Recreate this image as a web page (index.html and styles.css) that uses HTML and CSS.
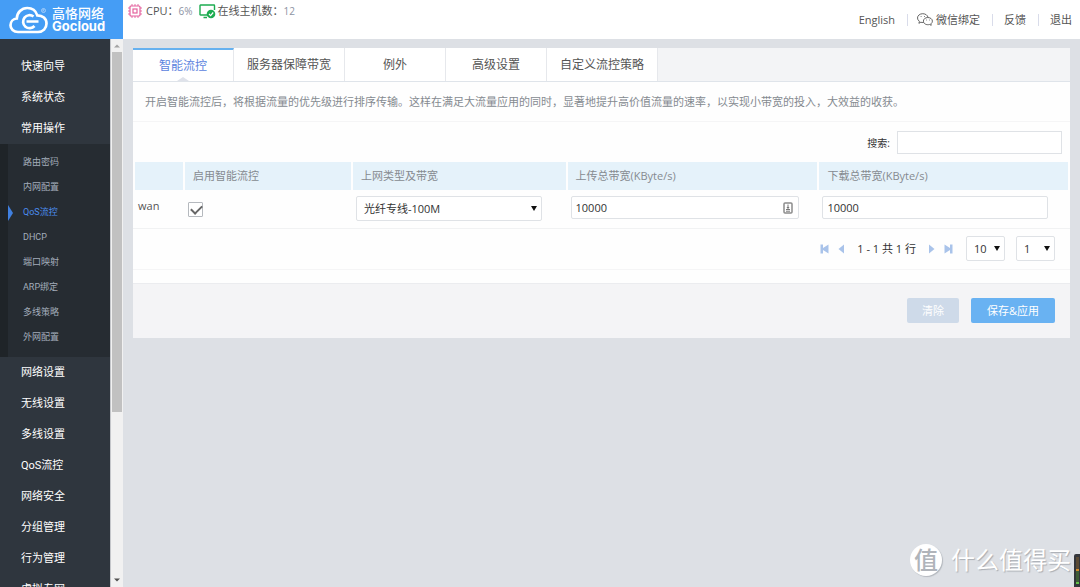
FILE: index.html
```html
<!DOCTYPE html>
<html lang="zh-CN">
<head>
<meta charset="utf-8">
<title>智能流控</title>
<link rel="stylesheet" href="styles.css">
</head>
<body>
<div class="app">
  <header class="topbar">
    <a class="brand" href="#">
      <svg class="brand-cloud" viewBox="0 0 40 28" aria-hidden="true">
        <path d="M9 26C4.500 26 1.500 23 1.500 19.300C1.500 15.500 4.300 12.800 7.800 12.500C8 6.500 12.500 2 18.300 2C23.200 2 26.800 4.700 28.300 9.300C33.700 9.300 37.500 12.700 37.500 17.600C37.500 22.500 34 26 29 26Z" fill="none" stroke="#fff" stroke-width="2.700"/>
        <path d="M24.500 10.500A6.500 6.500 0 1 0 25.500 20M17.500 15.500H29.500" fill="none" stroke="#fff" stroke-width="2.700"/>
        <circle cx="34.500" cy="4.500" r="2" fill="none" stroke="#b5d6fa" stroke-width="0.800"/>
        <path d="M34 5.500V3.500H35V4.500H34L35 5.500" fill="none" stroke="#b5d6fa" stroke-width="0.500"/>
      </svg>
      <span class="brand-text"><span class="brand-cn">高恪网络</span><span class="brand-en">Gocloud</span></span>
    </a>
    <div class="stats">
      <svg class="stat-icon" viewBox="0 0 14 14" fill="none" stroke="#e4619d" aria-hidden="true">
        <rect x="2" y="2" width="10" height="10" rx="1" stroke-width="1.200"/>
        <rect x="5" y="5" width="4" height="4" stroke-width="1.200"/>
        <path stroke-width="0.900" d="M4 0V2M7 0V2M10 0V2M4 12V14M7 12V14M10 12V14M0 4H2M0 7H2M0 10H2M12 4H14M12 7H14M12 10H14"/>
      </svg>
      <span>CPU：</span><span class="stat-value">6%</span>
      <svg class="stat-icon host-icon" viewBox="0 0 17 15" aria-hidden="true">
        <path d="M8 11H1.500Q1 11 1 10.500V1.500Q1 1 1.500 1H15Q15.500 1 15.500 1.500V6M4.500 13.500H8" fill="none" stroke="#1dac50" stroke-width="1.400"/>
        <circle cx="12" cy="10" r="4.300" fill="#1dac50"/>
        <path d="M10 10L11.600 11.600L14.200 8.500" fill="none" stroke="#fff" stroke-width="1.200"/>
      </svg>
      <span>在线主机数：</span><span class="stat-value">12</span>
    </div>
    <nav class="links">
      <a href="#" class="link-en">English</a>
      <a href="#" class="link-wechat">
        <svg viewBox="0 0 16 13" fill="none" stroke="#555" stroke-width="0.900" aria-hidden="true">
          <path d="M6.500 9.500Q5 9.700 3.900 9.200L1.900 10.300L2.400 8.300Q0.500 7 0.500 5C0.500 2.500 2.900 0.700 5.700 0.700C8.500 0.700 10.600 2.300 11 4.300"/>
          <path d="M10.800 4.500C13.400 4.500 15.400 6.100 15.400 8.100Q15.400 9.800 13.900 10.800L14.200 12.300L12.600 11.500C9.300 12.300 6.400 10.700 6.400 8.100C6.400 6.100 8.300 4.500 10.800 4.500Z"/>
          <path d="M3.700 3.500H4.500M7 3.500H7.800M9 7H9.700M12 7H12.700"/>
        </svg>微信绑定</a>
      <a href="#">反馈</a>
      <a href="#">退出</a>
    </nav>
  </header>
  <div class="body">
    <nav class="sidebar">
      <a href="#" class="nav-item">快速向导</a>
      <a href="#" class="nav-item">系统状态</a>
      <a href="#" class="nav-item">常用操作</a>
      <div class="submenu">
        <a href="#">路由密码</a>
        <a href="#">内网配置</a>
        <a href="#" class="current">QoS流控</a>
        <a href="#">DHCP</a>
        <a href="#">端口映射</a>
        <a href="#">ARP绑定</a>
        <a href="#">多线策略</a>
        <a href="#">外网配置</a>
      </div>
      <a href="#" class="nav-item">网络设置</a>
      <a href="#" class="nav-item">无线设置</a>
      <a href="#" class="nav-item">多线设置</a>
      <a href="#" class="nav-item">QoS流控</a>
      <a href="#" class="nav-item">网络安全</a>
      <a href="#" class="nav-item">分组管理</a>
      <a href="#" class="nav-item">行为管理</a>
      <a href="#" class="nav-item">虚拟专网</a>
    </nav>
    <div class="scrollbar" aria-hidden="true">
      <svg viewBox="0 0 6 4"><path d="M0 3.500L3 0.500L6 3.500Z" fill="#a3a3a3"/></svg>
      <div class="track"><div class="thumb"></div></div>
      <svg viewBox="0 0 6 4"><path d="M0 0.500L3 3.500L6 0.500Z" fill="#505050"/></svg>
    </div>
    <main class="main">
      <section class="panel">
        <nav class="tabs">
          <a href="#" class="tab active">智能流控</a>
          <a href="#" class="tab wide">服务器保障带宽</a>
          <a href="#" class="tab">例外</a>
          <a href="#" class="tab">高级设置</a>
          <a href="#" class="tab wide">自定义流控策略</a>
        </nav>
        <p class="intro">开启智能流控后，将根据流量的优先级进行排序传输。这样在满足大流量应用的同时，显著地提升高价值流量的速率，以实现小带宽的投入，大效益的收获。</p>
        <div class="search">
          <label for="search">搜索:</label>
          <input id="search" type="text">
        </div>
        <table class="grid">
          <colgroup><col class="c-name"><col class="c-on"><col class="c-type"><col class="c-up"><col class="c-down"></colgroup>
          <thead>
            <tr><th></th><th>启用智能流控</th><th>上网类型及带宽</th><th>上传总带宽(KByte/s)</th><th>下载总带宽(KByte/s)</th></tr>
          </thead>
          <tbody>
            <tr>
              <td class="cell-name">wan</td>
              <td class="cell-check"><input type="checkbox" checked aria-label="启用智能流控"></td>
              <td><span class="select type-select"><select aria-label="上网类型及带宽"><option>光纤专线-100M</option></select></span></td>
              <td>
                <span class="field">
                  <input type="text" value="10000" aria-label="上传总带宽(KByte/s)">
                  <svg class="field-icon" viewBox="0 0 10 12" aria-hidden="true">
                    <rect x="1" y="1" width="8" height="10" rx="1" fill="#fff" stroke="#8c8c8c" stroke-width="1.500"/>
                    <path d="M5 2.500V7M3.800 5.500H6.200M3 7.500H7M3 9.200H7" stroke="#777" stroke-width="1"/>
                  </svg>
                </span>
              </td>
              <td><span class="field"><input type="text" value="10000" aria-label="下载总带宽(KByte/s)"></span></td>
            </tr>
          </tbody>
        </table>
        <div class="pager">
          <button type="button" aria-label="首页"><svg viewBox="0 0 9 10"><path d="M0.500 0.500H3V4L8.500 0.500V9.500L3 6V9.500H0.500Z" fill="#a9c3ea"/></svg></button>
          <button type="button" aria-label="上一页"><svg viewBox="0 0 9 10"><path d="M7 0.500V9.500L1.500 5Z" fill="#a9c3ea"/></svg></button>
          <span class="pager-text">1 - 1 共 1 行</span>
          <button type="button" aria-label="下一页"><svg viewBox="0 0 9 10"><path d="M2 0.500V9.500L7.500 5Z" fill="#a9c3ea"/></svg></button>
          <button type="button" aria-label="末页"><svg viewBox="0 0 9 10"><path d="M8.500 0.500H6V4L0.500 0.500V9.500L6 6V9.500H8.500Z" fill="#a9c3ea"/></svg></button>
          <span class="select page-select"><select aria-label="每页行数"><option>10</option></select></span>
          <span class="select page-select"><select aria-label="页码"><option>1</option></select></span>
        </div>
        <div class="actions">
          <button type="button" class="btn btn-clear" disabled>清除</button>
          <button type="button" class="btn btn-save">保存&amp;应用</button>
        </div>
      </section>
    </main>
  </div>
  <div class="watermark"><span class="seal">值</span><span>什么值得买</span></div>
  <div class="meter" aria-hidden="true"></div>
</div>
</body>
</html>
```
FILE: styles.css
```css
* { box-sizing: border-box; }

body {
  margin: 0;
  background: #dde0e5;
  color: #555;
  font: 11px/16px "Open Sans", "Noto Sans CJK SC", sans-serif;
}

a { color: inherit; text-decoration: none; }
button, input, select { font: inherit; color: #333; }

.app {
  position: relative;
  display: flex;
  flex-direction: column;
  height: 100vh;
  overflow: hidden;
}

/* Top bar */
.topbar {
  display: flex;
  flex: none;
  height: 39px;
  background: #fff;
}

.brand {
  display: flex;
  align-items: center;
  gap: 3px;
  width: 123px;
  padding-left: 9px;
  background: #459df5;
  color: #fff;
}
.brand-cloud { width: 40px; height: 28px; }
.brand-text { display: flex; flex-direction: column; }
.brand-cn { font-size: 13px; line-height: 13px; font-weight: 500; }
.brand-en { font: 700 13px/13px Inter, sans-serif; }

.stats {
  display: flex;
  align-items: center;
  height: 22px;
  padding-left: 5px;
}
.stat-icon { width: 14px; height: 14px; margin-right: 4px; }
.host-icon { width: 17px; height: 15px; margin: 0 2px 0 6px; }
.stat-value { color: #8d93a3; font-size: 10px; }

.links {
  display: flex;
  align-items: center;
  margin-left: auto;
  padding-right: 8px;
}
.links a { display: flex; align-items: center; }
.links a + a::before {
  content: "";
  width: 1px;
  height: 12px;
  margin: 0 11px 0 12px;
  background: #d9dcea;
}
.links .link-wechat::before { margin-right: 9px; }
.links svg { width: 16px; height: 13px; margin-right: 3px; }

/* Sidebar */
.body { display: flex; flex: 1; min-height: 0; }

.sidebar {
  flex: none;
  width: 110px;
  padding-top: 12px;
  overflow: hidden;
  background: #2f363e;
  color: #fff;
  font-family: Roboto, "Noto Sans CJK SC", sans-serif;
}
.nav-item { display: block; padding-left: 21px; line-height: 31px; }

.submenu {
  padding: 6px 0 7px;
  border-left: 8px solid #1f2428;
  background: #262c32;
  color: #a3acbb;
  font-size: 9px;
}
.submenu a { display: block; position: relative; padding-left: 15px; line-height: 25px; }
.submenu .current { color: #4b8df0; }
.submenu .current::before {
  content: "";
  position: absolute;
  left: 0;
  top: 5px;
  border: solid transparent;
  border-width: 8px 0 8px 5px;
  border-left-color: #4080e0;
}

.scrollbar {
  display: flex;
  flex: none;
  flex-direction: column;
  align-items: center;
  gap: 4px;
  width: 13px;
  padding: 5px 1px;
  border-left: 1px solid #c4c6ca;
  background: #f1f1f1;
}
.scrollbar svg { width: 6px; height: 4px; }
.track { flex: 1; width: 100%; }
.thumb { height: 69%; background: #c1c1c1; }

/* Panel */
.main { flex: 1; min-width: 0; padding: 9px 10px 0; }
.panel { background: #fefefe; }

.tabs {
  display: flex;
  border-bottom: 1px solid #dfe4ea;
  background: #f3f4f6;
}
.tab {
  position: relative;
  width: 101px;
  padding-top: 1px;
  border-right: 1px solid #e6e8ec;
  background: #fff;
  font-size: 12px;
  line-height: 32px;
  text-align: center;
}
.tab.wide { width: 111px; }
.tab.active {
  border-top: 2px solid #66b1ef;
  color: #5c83de;
  line-height: 30px;
}
.tab.active::after {
  content: "";
  position: absolute;
  left: 50%;
  bottom: 0;
  margin-left: -6px;
  border: solid transparent;
  border-width: 0 6px 4px;
  border-bottom-color: #dfe2ea;
}

.intro {
  margin: 0;
  padding: 12px 12px 11px;
  border-bottom: 1px solid #f5f5f6;
  color: #858a90;
}

.search {
  display: flex;
  justify-content: flex-end;
  align-items: center;
  gap: 7px;
  padding: 9px 8px 8px;
  font-size: 10px;
  color: #333;
}

.search input,
.field input,
.select select {
  border: 1px solid #dfe2e6;
  border-radius: 2px;
  background: #fff;
  outline: 0;
}
.search input { width: 165px; height: 23px; padding: 0 5px; border-radius: 0; }

.grid {
  width: 100%;
  padding: 0 2px;
  border-spacing: 0;
  border-bottom: 1px solid #f1f2f3;
  table-layout: fixed;
}
.c-name { width: 50px; }
.c-on { width: 18%; }
.c-type { width: 23%; }
.c-up { width: 27%; }

.grid th {
  height: 28px;
  padding: 0 8px;
  border-right: 2px solid #fefefe;
  background: #e5f2fa;
  color: #858a90;
  font-weight: 400;
  text-align: left;
}
.grid th:last-child { border-right: 0; }
.grid td { height: 38px; padding: 6px 3px; vertical-align: top; }
.grid .cell-name { padding-top: 8px; }
.grid .cell-check { padding-top: 12px; }

.cell-check input {
  display: block;
  width: 15px;
  height: 15px;
  margin: 0;
  border: 1px solid #b5b9be;
  border-radius: 1px;
  appearance: none;
  background: #fff;
}
.cell-check input:checked::before {
  content: "";
  display: block;
  width: 9px;
  height: 5px;
  margin: 2px;
  border: solid #666;
  border-width: 0 0 2px 2px;
  transform: rotate(-45deg);
}

.field { display: block; position: relative; width: 93%; }
.field input { display: block; width: 100%; height: 23px; padding: 0 4px; }
.field-icon { position: absolute; top: 6px; right: 6px; width: 10px; height: 12px; }

.select { display: block; position: relative; }
.select select { display: block; width: 100%; height: 25px; padding: 0 7px; appearance: none; }
.select::after {
  content: "";
  position: absolute;
  right: 5px;
  top: 10px;
  border: solid transparent;
  border-width: 5px 3px 0;
  border-top-color: #111;
}
.type-select { width: 89%; }

.pager {
  display: flex;
  justify-content: flex-end;
  align-items: center;
  gap: 8px;
  padding: 7px 15px 8px;
  border-bottom: 1px solid #f5f5f6;
  color: #333;
}
.pager button {
  display: flex;
  padding: 0;
  border: 0;
  background: none;
}
.pager svg { width: 9px; height: 10px; }
.pager-text { padding: 0 3px; }
.page-select { width: 39px; margin-left: 3px; }
.pager button + .page-select { margin-left: 5px; }

.actions {
  display: flex;
  justify-content: flex-end;
  gap: 12px;
  margin-top: 13px;
  padding: 14px 15px 15px;
  border-top: 1px solid #ebecef;
  background: #f4f4f6;
}
.btn { height: 25px; padding: 0 15px; border: 0; border-radius: 2px; color: #fff; }
.btn-clear { background: #cedae9; }
.btn-save { padding: 0 16px; background: #69b2f2; }

/* Overlays */
.watermark {
  position: absolute;
  right: 9px;
  bottom: 11px;
  display: flex;
  align-items: center;
  gap: 9px;
  color: #fff;
  font-size: 24px;
  line-height: 32px;
  text-shadow: 1px 1px 1px #a9adb3;
}
.seal {
  width: 32px;
  height: 32px;
  border-radius: 50%;
  background: #fff;
  box-shadow: 1px 1px 1px #b4b8be;
  color: #b0b4ba;
  font-weight: 500;
  text-align: center;
  text-shadow: none;
}
.meter {
  position: absolute;
  right: 0;
  bottom: 0;
  width: 6px;
  height: 33px;
  border: solid #34363b;
  border-width: 3px 2px;
  border-right-width: 1px;
  border-radius: 2px 0 0 0;
  background: linear-gradient(#5a4a35 45%, #d28a2c 45% 52%, #3f5c36 52% 92%, #62c046 92%);
}
```
